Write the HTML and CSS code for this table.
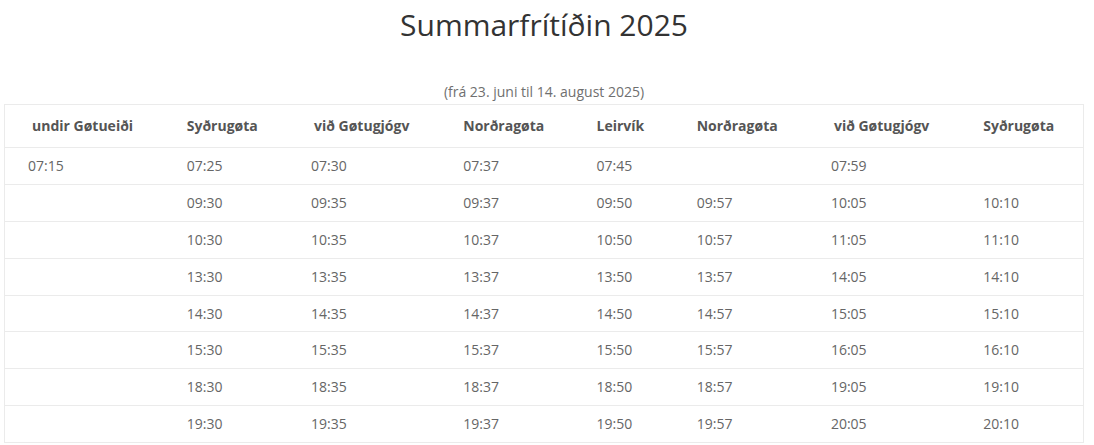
FILE: index.html
```html
<!DOCTYPE html>
<html lang="fo">
<head>
<meta charset="utf-8">
<title>Summarfrítíðin 2025</title>
<link rel="stylesheet" href="styles.css">
</head>
<body>
<div class="page">
  <h1 class="title">Summarfrítíðin 2025</h1>
  <p class="subtitle">(frá 23. juni til 14. august 2025)</p>
  <table class="timetable">
    <colgroup>
      <col class="c1"><col class="c2"><col class="c3"><col class="c4">
      <col class="c5"><col class="c6"><col class="c7"><col class="c8">
    </colgroup>
    <thead>
      <tr>
        <th class="shift4">undir Gøtueiði</th>
        <th>Syðrugøta</th>
        <th class="shift3">við Gøtugjógv</th>
        <th>Norðragøta</th>
        <th>Leirvík</th>
        <th>Norðragøta</th>
        <th class="shift3">við Gøtugjógv</th>
        <th>Syðrugøta</th>
      </tr>
    </thead>
    <tbody>
      <tr><td>07:15</td><td>07:25</td><td>07:30</td><td>07:37</td><td>07:45</td><td></td><td>07:59</td><td></td></tr>
      <tr><td></td><td>09:30</td><td>09:35</td><td>09:37</td><td>09:50</td><td>09:57</td><td>10:05</td><td>10:10</td></tr>
      <tr><td></td><td>10:30</td><td>10:35</td><td>10:37</td><td>10:50</td><td>10:57</td><td>11:05</td><td>11:10</td></tr>
      <tr><td></td><td>13:30</td><td>13:35</td><td>13:37</td><td>13:50</td><td>13:57</td><td>14:05</td><td>14:10</td></tr>
      <tr><td></td><td>14:30</td><td>14:35</td><td>14:37</td><td>14:50</td><td>14:57</td><td>15:05</td><td>15:10</td></tr>
      <tr><td></td><td>15:30</td><td>15:35</td><td>15:37</td><td>15:50</td><td>15:57</td><td>16:05</td><td>16:10</td></tr>
      <tr><td></td><td>18:30</td><td>18:35</td><td>18:37</td><td>18:50</td><td>18:57</td><td>19:05</td><td>19:10</td></tr>
      <tr><td></td><td>19:30</td><td>19:35</td><td>19:37</td><td>19:50</td><td>19:57</td><td>20:05</td><td>20:10</td></tr>
    </tbody>
  </table>
</div>
</body>
</html>
```
FILE: styles.css
```css
html, body {
  margin: 0;
  padding: 0;
  background: #ffffff;
}
body {
  font-family: "Open Sans", "Liberation Sans", sans-serif;
  font-size: 14px;
  line-height: 20px;
  color: #666666;
}
.page {
  padding: 8px 0 0 4px;
  width: 1080px;
}
.title {
  margin: 0;
  font-size: 30px;
  line-height: 33px;
  font-weight: 400;
  color: #333333;
  text-align: center;
}
.subtitle {
  margin: 41px 0 0 0;
  text-align: center;
  color: #6f6f6f;
}
.timetable {
  margin-top: 2px;
  width: 1080px;
  border-collapse: collapse;
  table-layout: fixed;
  border: 1px solid #ebebeb;
}
.c1 { width: 159px; }
.c2 { width: 124px; }
.c3 { width: 152px; }
.c4 { width: 133px; }
.c5 { width: 100px; }
.c6 { width: 134px; }
.c7 { width: 152px; }
.c8 { width: 123px; }
.timetable th,
.timetable td {
  text-align: left;
  padding: 8px 0 7.875px 23px;
  border-bottom: 1px solid #ebebeb;
  white-space: nowrap;
}
.timetable th {
  padding-top: 11px;
  padding-bottom: 11px;
  font-weight: 700;
  color: #555555;
}
.timetable th.shift4 { padding-left: 27px; }
.timetable th.shift3 { padding-left: 26px; }
```
